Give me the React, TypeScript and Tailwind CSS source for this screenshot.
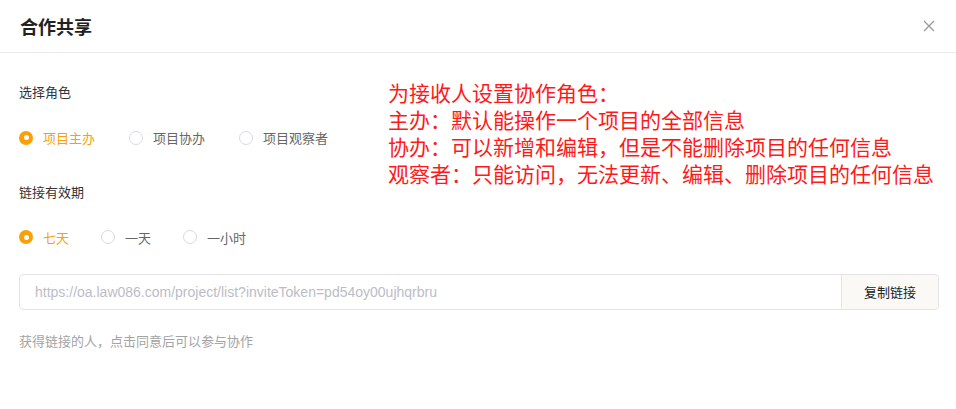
import React, { useState } from "react";

const roles = ["项目主办", "项目协办", "项目观察者"];
const periods = ["七天", "一天", "一小时"];

const notes = [
  "为接收人设置协作角色：",
  "主办：默认能操作一个项目的全部信息",
  "协办：可以新增和编辑，但是不能删除项目的任何信息",
  "观察者：只能访问，无法更新、编辑、删除项目的任何信息",
];

function Radio({ label, checked, onClick }: { label: string; checked: boolean; onClick: () => void }) {
  return (
    <label onClick={onClick} className="flex cursor-pointer items-center">
      <span
        className={
          checked
            ? "flex h-[14px] w-[14px] items-center justify-center rounded-full bg-[#faa005]"
            : "h-[14px] w-[14px] rounded-full border border-[#d9d9e0] bg-white"
        }
      >
        {checked && <span className="h-[5px] w-[5px] rounded-full bg-white" />}
      </span>
      <span className={"ml-[10px] text-[13px] " + (checked ? "text-[#faa005]" : "text-[#666]")}>{label}</span>
    </label>
  );
}

export default function App() {
  const [role, setRole] = useState(0);
  const [period, setPeriod] = useState(0);

  return (
    <div className="h-[409px] w-[956px] bg-white font-['Noto_Sans_CJK_SC',sans-serif] text-[#333]">
      <div className="flex h-[53px] items-center justify-between border-b border-[#ececec] pl-[20px] pr-[20px]">
        <h1 className="text-[18px] font-bold text-[#222]">合作共享</h1>
        <svg width="12" height="12" viewBox="0 0 12 12" className="mr-[1px]">
          <path d="M1 1L11 11M11 1L1 11" stroke="#999" strokeWidth="1.3" />
        </svg>
      </div>

      <div className="relative px-[19px] pt-[29px]">
        <p className="text-[13px] leading-[20px] text-[#333]">选择角色</p>
        <div className="mt-[26px] flex gap-[22px]">
          <div className="w-[88px]"><Radio label={roles[0]} checked={role === 0} onClick={() => setRole(0)} /></div>
          <div className="w-[88px]"><Radio label={roles[1]} checked={role === 1} onClick={() => setRole(1)} /></div>
          <Radio label={roles[2]} checked={role === 2} onClick={() => setRole(2)} />
        </div>

        <p className="mt-[34px] text-[13px] leading-[20px] text-[#333]">链接有效期</p>
        <div className="mt-[26px] flex">
          <div className="w-[82px]"><Radio label={periods[0]} checked={period === 0} onClick={() => setPeriod(0)} /></div>
          <div className="w-[82px]"><Radio label={periods[1]} checked={period === 1} onClick={() => setPeriod(1)} /></div>
          <Radio label={periods[2]} checked={period === 2} onClick={() => setPeriod(2)} />
        </div>

        <div className="mt-[27px] flex h-[36px] w-[920px] rounded-[4px] border border-[#e3e3e8]">
          <input
            readOnly
            value="https://oa.law086.com/project/list?inviteToken=pd54oy00ujhqrbru"
            className="flex-1 bg-transparent pl-[15px] font-['Liberation_Sans',sans-serif] text-[14px] text-[#bcbcc6] outline-none"
          />
          <button className="w-[97px] rounded-r-[4px] border-l border-[#e3e3e8] bg-[#fbf9f5] text-[13px] text-[#222]">
            复制链接
          </button>
        </div>

        <p className="mt-[21px] text-[13px] text-[#a3a3a3]">获得链接的人，点击同意后可以参与协作</p>

        <div className="absolute left-[388px] top-[26px] text-[21px] leading-[27px] text-[#ff1a1a]">
          {notes.map((n) => (
            <div key={n}>{n}</div>
          ))}
        </div>
      </div>
    </div>
  );
}
